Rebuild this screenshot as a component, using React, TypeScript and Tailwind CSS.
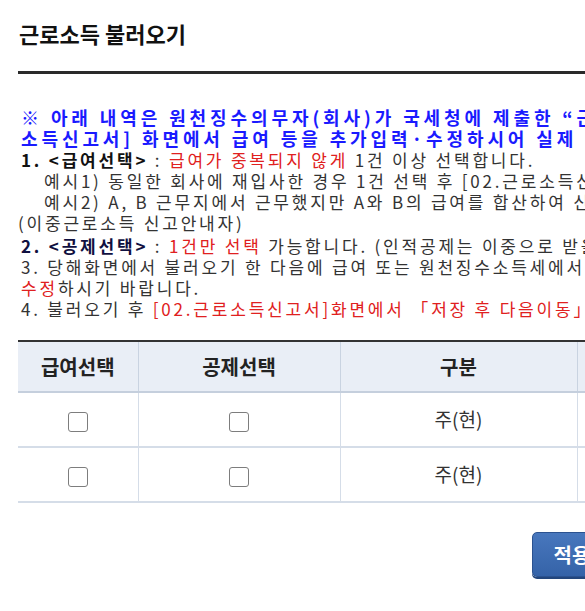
import React from 'react';

const FONT = "font-['Noto_Sans_CJK_KR','Noto_Sans',sans-serif]";

const rows = [
  { gubun: '주(현)', biz: '123-45-67890' },
  { gubun: '주(현)', biz: '123-45-67890' },
];

function Check() {
  return (
    <input
      type="checkbox"
      className="appearance-none w-5 h-5 rounded-[3px] border-[1.5px] border-[#7d7d7d] bg-white align-middle"
    />
  );
}

export default function App() {
  return (
    <div className={`w-[585px] h-[611px] overflow-hidden bg-white text-[#333] ${FONT}`}>
      <div className="w-[1300px] pl-[18px] pt-[18px]">
        {/* title */}
        <h1 className="pl-[1px] text-[22px] leading-[30px] font-bold text-[#111]">근로소득 불러오기</h1>
        <div className="mt-[23px] h-[3px] bg-[#2a2a2a]" />

        {/* notice */}
        <div className="mt-[33px] pl-[3px] text-[17px] leading-[21px] tracking-[2.8px] whitespace-nowrap">
          <p className="font-bold text-[18px] text-[#1a1aff] tracking-[3.9px]">
            ※ 아래 내역은 원천징수의무자(회사)가 국세청에 제출한 “근로소득 지급명세서” 내역입니다. [02.근로
          </p>
          <p className="font-bold text-[18px] text-[#1a1aff] tracking-[3.9px]">
            소득신고서] 화면에서 급여 등을 추가입력·수정하시어 실제 소득과 일치하도록 하시기 바랍니다.
          </p>
          <p>
            <span className="font-bold text-[#111]">1. &lt;급여선택&gt;</span> : <span className="text-[#e02020]">급여가 중복되지 않게</span> 1건 이상 선택합니다.
          </p>
          <p className="pl-[23px]">예시1) 동일한 회사에 재입사한 경우 1건 선택 후 [02.근로소득신고서]에서 수정</p>
          <p className="pl-[23px]">예시2) A, B 근무지에서 근무했지만 A와 B의 급여를 합산하여 신고한 경우</p>
          <p className="-ml-[3px]">(이중근로소득 신고안내자)</p>
          <p className="mt-[2px]">
            <span className="font-bold text-[#101040]">2. &lt;공제선택&gt;</span> : <span className="text-[#e02020]">1건만 선택</span> 가능합니다. (인적공제는 이중으로 받을 수 없습니다.)
          </p>
          <p>3. 당해화면에서 불러오기 한 다음에 급여 또는 원천징수소득세에서 차이가 있는 경우 반드시</p>
          <p>
            <span className="text-[#e02020]">수정</span>하시기 바랍니다.
          </p>
          <p>
            4. 불러오기 후 <span className="text-[#e02020]">[02.근로소득신고서]화면에서 「저장 후 다음이동」</span> 버튼을 누르십시오.
          </p>
        </div>

        {/* table */}
        <table className="mt-[21px] w-[1180px] border-collapse table-fixed">
          <colgroup>
            <col className="w-[120px]" />
            <col className="w-[202px]" />
            <col className="w-[237px]" />
            <col className="w-[240px]" />
            <col />
          </colgroup>
          <thead>
            <tr className="h-[51px] bg-[#e9eef6] border-t-2 border-t-[#333] border-b-2 border-b-[#c5cfdd] text-[20px]">
              <th className="font-bold text-[#222] border-r border-[#c9d3e1]">급여선택</th>
              <th className="font-bold text-[#222] border-r border-[#c9d3e1]">공제선택</th>
              <th className="font-bold text-[#222] border-r border-[#c9d3e1]">구분</th>
              <th className="font-bold text-[#222] border-r border-[#c9d3e1]">사업자등록번호</th>
              <th className="font-bold text-[#222]">상호</th>
            </tr>
          </thead>
          <tbody className="text-[19px]">
            {rows.map((r, i) => (
              <tr key={i} className="h-[55px] border-b-2 border-[#d5dde8]">
                <td className="text-center border-r border-[#d5dde8]"><Check /></td>
                <td className="text-center border-r border-[#d5dde8]"><Check /></td>
                <td className="text-center text-[#333] border-r border-[#d5dde8]">{r.gubun}</td>
                <td className="text-center text-[#333] border-r border-[#d5dde8]">{r.biz}</td>
                <td className="text-center text-[#333]">(주)회사</td>
              </tr>
            ))}
          </tbody>
        </table>

        {/* buttons */}
        <div className="mt-[29px] w-[1196px] flex justify-center gap-2">
          <button className="w-[80px] h-[45px] rounded-[5px] border border-[#2b5290] bg-gradient-to-b from-[#4877bd] to-[#3563a8] text-white text-[20px] font-bold shadow-[0_2px_0_#23467c]">
            적용
          </button>
          <button className="w-[80px] h-[45px] rounded-[5px] border border-[#2b5290] bg-gradient-to-b from-[#4877bd] to-[#3563a8] text-white text-[20px] font-bold shadow-[0_2px_0_#23467c]">
            닫기
          </button>
        </div>
      </div>
    </div>
  );
}
